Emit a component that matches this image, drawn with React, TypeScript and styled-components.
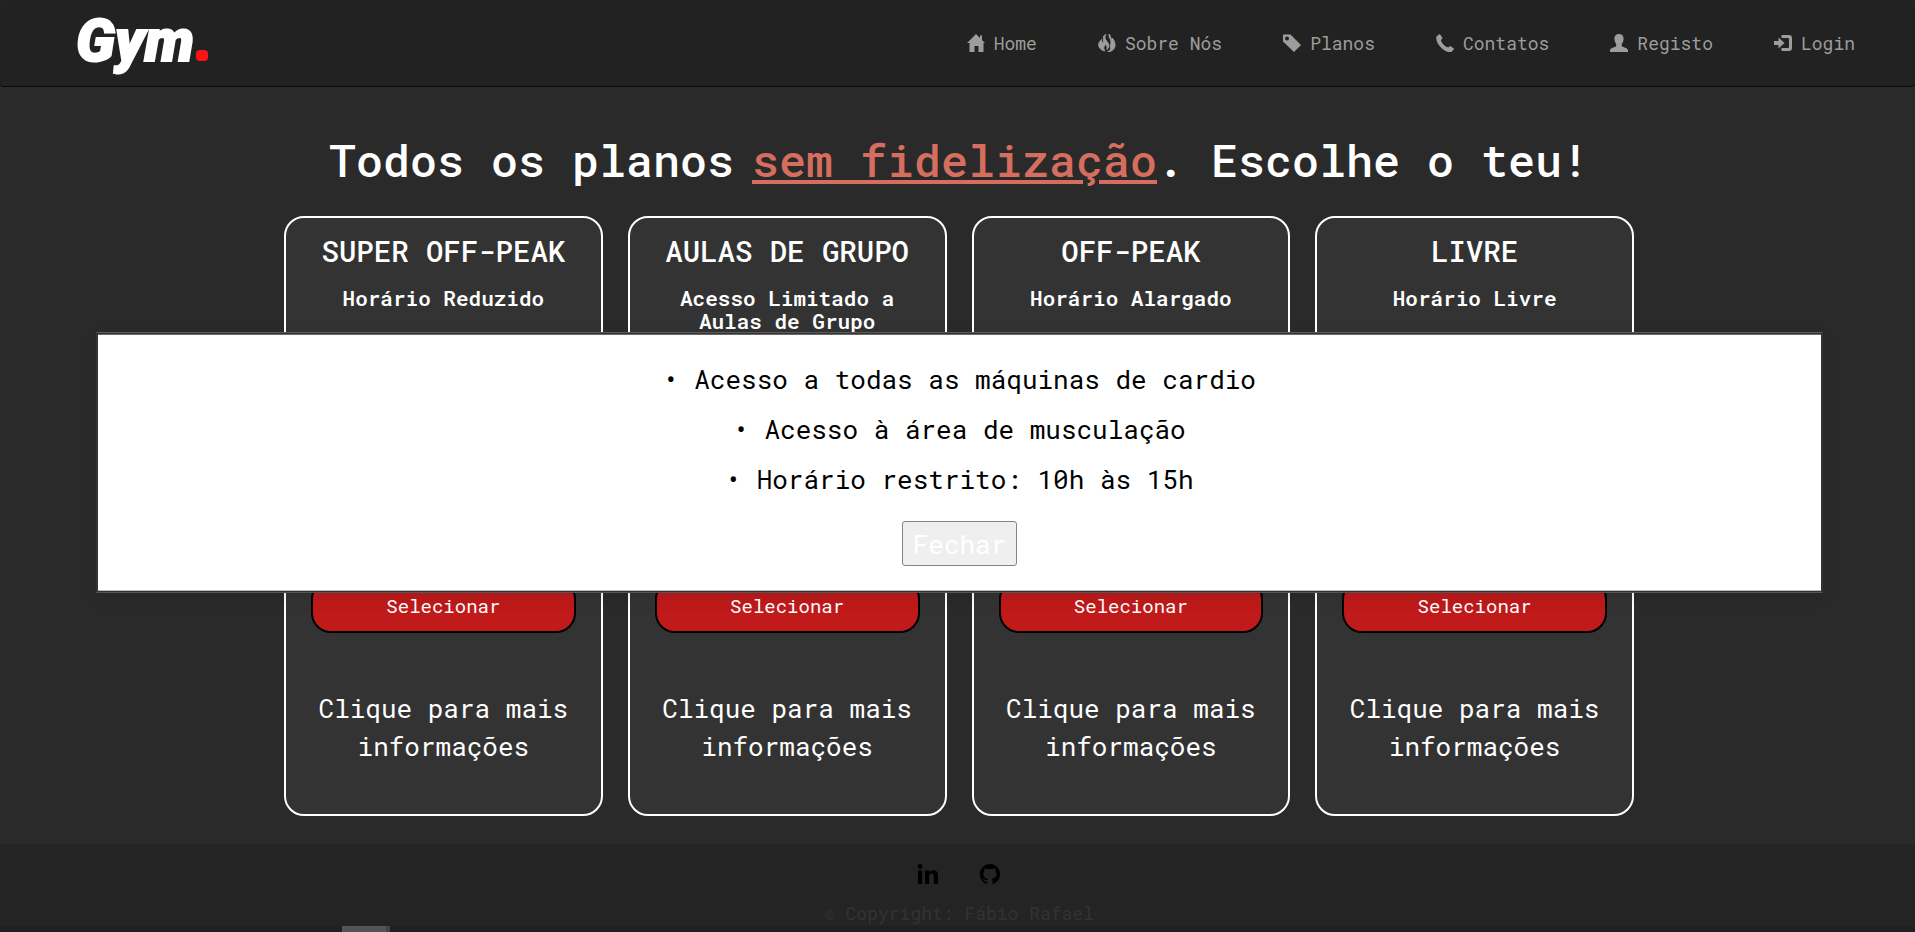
import React from 'react';
import styled, { createGlobalStyle } from 'styled-components';

const GlobalStyle = createGlobalStyle`
  *, *::before, *::after { box-sizing: border-box; }
  html { background: #2a2a2a; }
  body {
    margin: 0;
    color: #fff;
    font-family: "Roboto Mono", "DejaVu Sans Mono", "Liberation Mono", monospace;
    font-size: 18px;
    line-height: 26px;
  }
  h1, h2, h3, p, ul { margin: 0; padding: 0; }
  h1, h2 { font-weight: 500; }
  button { font-family: inherit; cursor: pointer; }
`;

const Page = styled.div`
  position: relative;
  display: flex;
  flex-direction: column;
  min-height: 100vh;
`;

const NavBar = styled.header`
  display: flex;
  align-items: center;
  justify-content: space-between;
  height: 87px;
  padding: 0 60px 0 76px;
  background: #222;
  border-bottom: 1px solid #080808;
  border-radius: 4px;
`;

const Logo = styled.a`
  display: flex;
  align-items: baseline;
  gap: 2px;
  padding-bottom: 5px;
  color: #fff;
  font-family: Roboto, "Liberation Sans", sans-serif;
  font-size: 59px;
  font-style: italic;
  font-weight: 900;
  line-height: 80px;
  text-decoration: none;
  -webkit-text-stroke: 2px #fff;
`;

const LogoDot = styled.span`
  width: 12px;
  height: 11px;
  border-radius: 4px;
  background: #fb1416;
`;

const NavLinks = styled.nav`
  display: flex;
  gap: 61px;
`;

const NavLink = styled.a`
  display: flex;
  align-items: center;
  gap: 9px;
  color: #9d9d9d;
  text-decoration: none;

  svg { width: 18px; height: 18px; fill: currentColor; }
`;

const Main = styled.main`
  flex: 1;
  width: 100%;
  max-width: 1353px;
  margin: 0 auto;
  padding: 46px 0 28px 3px;
`;

const Heading = styled.h1`
  font-size: 30px;
  line-height: 54px;
  text-align: center;
`;

const HeadingPart = styled.span`
  font-size: 45px;
`;

const HeadingLink = styled.a`
  color: #d56e5e;
  font-size: 45px;
  text-decoration: underline;
`;

const Plans = styled.div`
  display: grid;
  grid-template-columns: repeat(4, 1fr);
  gap: 25px;
  margin-top: 23px;
`;

const Card = styled.article`
  display: flex;
  flex-direction: column;
  min-height: 600px;
  padding: 17px 25px 38px;
  border: 2px solid #fff;
  border-radius: 20px;
  background: #333;
  text-align: center;
`;

const CardTitle = styled.h2`
  font-size: 29px;
  line-height: 32px;
  white-space: nowrap;
`;

const CardSubtitle = styled.h3`
  margin-top: 20px;
  font-size: 21px;
  font-weight: 600;
  line-height: 23px;
`;

const SelectButton = styled.button`
  height: 54px;
  margin-top: auto;
  padding-bottom: 3px;
  border: 2px solid #000;
  border-radius: 20px;
  background: #c01a1a;
  color: #fff;
  font-size: 19px;
`;

const CardInfo = styled.p`
  margin: 56px -10px 0;
  padding: 0 10px 11px;
  font-size: 26px;
  line-height: 38px;
`;

const Footer = styled.footer`
  display: flex;
  flex-direction: column;
  background: #242424;
  color: #333;
`;

const FooterContent = styled.div`
  display: flex;
  flex-direction: column;
  align-items: center;
  gap: 15px;
  padding: 19px 0 0 3px;
`;

const Social = styled.div`
  display: flex;
  gap: 40px;

  a { display: flex; color: #000; }
  svg { width: 22px; height: 22px; fill: currentColor; }
`;

const ScrollTrack = styled.div`
  height: 6px;
  padding-left: 342px;
  background: #202023;
`;

const ScrollThumb = styled.div`
  width: 48px;
  height: 6px;
  border-right: 4px solid #444;
  background: #545454;
`;

const Modal = styled.section`
  position: absolute;
  top: 332px;
  left: 5%;
  width: calc(90% + 4px);
  display: flex;
  flex-direction: column;
  align-items: center;
  padding: 21px 0 26px;
  border: 1px solid;
  border-color: #5a5a5a #333 #555;
  background: #fff;
  color: #000;
  font-size: 26px;
  line-height: 50px;
  box-shadow:
    inset 0 0 0 1px #333,
    inset 0 2px #6a6a6a,
    inset 0 -2px #bbb,
    0 5px 15px rgba(0, 0, 0, 0.1);
`;

const Benefits = styled.ul`
  list-style: none;
  text-align: center;

  li::before { content: "• "; }
`;

const CloseButton = styled.button`
  height: 45px;
  margin-top: 17px;
  padding: 0 10px;
  border: 1px solid #858585;
  border-radius: 3px;
  background: #efefef;
  color: #fff;
  font-size: 26px;
`;

const links = [
  { label: 'Home', icon: <path d="M9 0 0 9h2.500v9h5v-6h4v6h5V9H18L15 6V1.500h-2V4z" /> },
  {
    label: 'Sobre Nós',
    icon: (
      <path stroke="currentColor" d="M8 0C3 3 7 6 5 9 3.800 9 3.500 7 3.800 5.500.5 8 0 11 1.500 13.500 2.500 15.500 4.500 16.500 7 17 4.500 14 6 12 8.500 10 8.500 12 9.500 13 9 15.500 12.500 12 10.500 9 8.500 7 6.500 5 6.500 2 8 0zM11 0C10.500 3 13 5 13 8 13 11 12 11 12.500 13 13 15 12 17 9.500 18 15 17.500 17 14 17 11 17 8 15.500 5 14 4 14 6 14 6 13.500 6.500 13 4 12.500 2 11 0z" />
    ),
  },
  {
    label: 'Planos',
    icon: <path fillRule="evenodd" d="M0 1.500Q0 .5 1 .5h6.500L18 11l-7 7L0 7.500zM4 2.500a2 2 0 1 0 0 4 2 2 0 0 0 0-4z" />,
  },
  {
    label: 'Contatos',
    icon: <path d="M.5 2.500 3 .3c.5-.4 1 0 1.500.5L6.200 3.500c.3.600.2 1-.2 1.400L4.800 6c1 3.500 4 6.500 7.500 7.500l1-1c.4-.4.900-.5 1.400-.2l2.800 1.900c.5.400.6.900.2 1.400l-2.300 2.400C9 20-1.500 8.500.5 2.500z" />,
  },
  {
    label: 'Registo',
    icon: <path d="M9 0c3 0 4.600 2 4.600 4.500 0 2-.6 4-1.800 5.300v2.400c2 1 6.200 2 6.200 4V18H0v-1.800c0-2 4.200-3 6.200-4V9.800C5 8.500 4.400 6.500 4.400 4.500 4.400 2 6 0 9 0z" />,
  },
  {
    label: 'Login',
    icon: <path d="M0 7h4.500V3.500L10.500 9l-6 5.500V11H0zM7.500 1H15q3 0 3 3v10q0 3-3 3H7.500v-3H14q1 0 1-1V5q0-1-1-1H7.500z" />,
  },
];

const plans = [
  { title: 'SUPER OFF-PEAK', subtitle: 'Horário Reduzido' },
  { title: 'AULAS DE GRUPO', subtitle: 'Acesso Limitado a Aulas de Grupo' },
  { title: 'OFF-PEAK', subtitle: 'Horário Alargado' },
  { title: 'LIVRE', subtitle: 'Horário Livre' },
];

const benefits = [
  'Acesso a todas as máquinas de cardio',
  'Acesso à área de musculação',
  'Horário restrito: 10h às 15h',
];

export default function App() {
  const [open, setOpen] = React.useState(true);

  return (
    <>
      <GlobalStyle />
      <Page>
        <NavBar>
          <Logo href="#home">
            Gym
            <LogoDot />
          </Logo>
          <NavLinks>
            {links.map(({ label, icon }) => (
              <NavLink key={label} href="#">
                <svg viewBox="0 0 18 18" aria-hidden="true">{icon}</svg>
                {label}
              </NavLink>
            ))}
          </NavLinks>
        </NavBar>

        <Main>
          <Heading>
            <HeadingPart>Todos os planos</HeadingPart>{' '}
            <HeadingLink href="#fidelizacao">sem fidelização</HeadingLink>
            <HeadingPart>. Escolhe o teu!</HeadingPart>
          </Heading>
          <Plans>
            {plans.map(({ title, subtitle }) => (
              <Card key={title}>
                <CardTitle>{title}</CardTitle>
                <CardSubtitle>{subtitle}</CardSubtitle>
                <SelectButton type="button">Selecionar</SelectButton>
                <CardInfo>Clique para mais informações</CardInfo>
              </Card>
            ))}
          </Plans>
        </Main>

        <Footer>
          <FooterContent>
            <Social>
              <a href="#linkedin" aria-label="LinkedIn">
                <svg viewBox="0 0 22 22">
                  <path d="M1 7.500h4.200V21H1zM3.100 1a2.400 2.400 0 1 1 0 4.800 2.400 2.400 0 0 1 0-4.800zM8 7.500h4v1.900c.7-1.300 2.200-2.200 4.200-2.200 4 0 4.800 2.600 4.800 6V21h-4.200v-7c0-1.700-.1-3.400-2.200-3.400s-2.400 1.600-2.400 3.300V21H8z" />
                </svg>
              </a>
              <a href="#github" aria-label="GitHub">
                <svg viewBox="0 0 16 16">
                  <path d="M8 .7C3.900.7.600 4 .6 8.100c0 3.300 2.100 6 5 7 .4.100.5-.2.5-.4v-1.300c-2 .4-2.500-.9-2.500-.9-.3-.8-.8-1.100-.8-1.100-.7-.4 0-.4 0-.4.700.1 1.100.8 1.100.8.700 1.100 1.700.8 2.200.6.100-.5.300-.8.500-1-1.700-.2-3.400-.8-3.400-3.600 0-.8.300-1.500.8-2-.1-.2-.3-1 .1-2 0 0 .6-.2 2 .8a7 7 0 0 1 3.700 0c1.400-1 2-.8 2-.8.400 1 .2 1.800.1 2 .5.500.8 1.200.8 2 0 2.800-1.700 3.400-3.400 3.600.3.200.5.700.5 1.400v2c0 .2.100.5.500.4a7.400 7.400 0 0 0 5-7C15.400 4 12.100.7 8 .7z" />
                </svg>
              </a>
            </Social>
            <p>© Copyright: Fábio Rafael</p>
          </FooterContent>
          <ScrollTrack>
            <ScrollThumb />
          </ScrollTrack>
        </Footer>

        {open && (
          <Modal role="dialog" aria-label="Informações do plano">
            <Benefits>
              {benefits.map((text) => (
                <li key={text}>{text}</li>
              ))}
            </Benefits>
            <CloseButton type="button" onClick={() => setOpen(false)}>Fechar</CloseButton>
          </Modal>
        )}
      </Page>
    </>
  );
}
